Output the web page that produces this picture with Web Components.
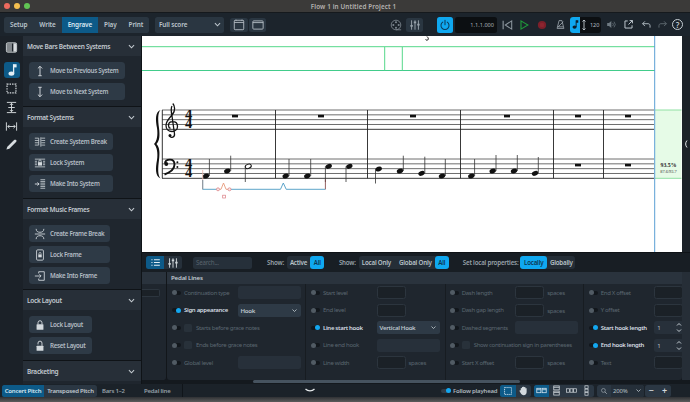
<!DOCTYPE html>
<html>
<head>
<meta charset="utf-8">
<title>Flow 1 in Untitled Project 1</title>
<style>
  html, body { margin: 0; padding: 0; background: #4a4a4a; }
  body { font-family: "Noto Sans", "Liberation Sans", sans-serif; }
</style>
</head>
<body>
<dm-app></dm-app>
<script>
const icons = {
  prevSystem: `<path d="M7 1.5V12.5M5 12.5H9M4.5 4L7 1.5L9.5 4" fill="none" stroke="currentColor" stroke-width="1.1"/>`,
  nextSystem: `<path d="M7 1.5V12.5M5 1.5H9M4.5 10L7 12.5L9.5 10" fill="none" stroke="currentColor" stroke-width="1.1"/>`,
  systemBreak: `<path d="M1 2.5H5.5M1 5.2H5.5M1 7.9H5.5M1 10.6H5.5M8 1.5V12.5M8.5 2.5H13M8.5 5.2H13M8.5 7.9H13M8.5 10.6H13M5.5 2.5V10.6" fill="none" stroke="currentColor" stroke-width=".9"/>`,
  lockSystem: `<path d="M1 2.5H13M1 11.5H13M1 5H3.5M1 7H3.5M1 9H3.5M10.5 5H13M10.5 7H13M10.5 9H13" fill="none" stroke="currentColor" stroke-width=".9"/><rect x="4.6" y="6" width="4.8" height="4" fill="currentColor"/><path d="M5.6 6V4.8a1.4 1.4 0 0 1 2.8 0V6" fill="none" stroke="currentColor" stroke-width=".9"/>`,
  intoSystem: `<path d="M1 7H5.5M4 5.3L6 7L4 8.7" fill="none" stroke="currentColor" stroke-width="1.1"/><path d="M7.5 2H13M7.5 4H13M7.5 6H13M7.5 8H13M7.5 10H13M7.5 12H13" fill="none" stroke="currentColor" stroke-width=".9"/>`,
  frameBreak: `<path d="M2.5 1C2.5 4 4.5 5 7 5S11.5 4 11.5 1M2.5 13C2.5 10 4.5 9 7 9S11.5 10 11.5 13" fill="none" stroke="currentColor" stroke-width="1"/><path d="M1 7H13" stroke="currentColor" stroke-width="1"/>`,
  lockFrame: `<rect x="3" y="1" width="8" height="12" rx="1.2" fill="none" stroke="currentColor" stroke-width="1"/><rect x="5" y="6.3" width="4" height="3.4" fill="currentColor"/><path d="M5.8 6.3V5.2a1.2 1.2 0 0 1 2.4 0V6.3" fill="none" stroke="currentColor" stroke-width=".8"/>`,
  intoFrame: `<path d="M5.5 4V2H12V12H5.5V10" fill="none" stroke="currentColor" stroke-width="1"/><path d="M1 7H8M6.3 5L8.3 7L6.3 9" fill="none" stroke="currentColor" stroke-width="1"/>`,
  lock: `<rect x="3" y="6.2" width="8" height="6.3" rx=".6" fill="currentColor"/><path d="M4.7 6.2V4.3a2.3 2.3 0 0 1 4.6 0V6.2" fill="none" stroke="currentColor" stroke-width="1.1"/>`,
  unlock: `<rect x="3" y="6.8" width="8" height="5.7" rx=".6" fill="currentColor"/><path d="M4.7 5.2V3.6a2.3 2.3 0 0 1 4.6 0V6.8" fill="none" stroke="currentColor" stroke-width="1.1"/>`,
  panel: `<rect x="1.5" y="2" width="11" height="10" rx="1.4" fill="none" stroke="currentColor" stroke-width="1"/><path d="M2 2.5H7.5V11.5H2Z" fill="currentColor" opacity=".55"/><path d="M9 2.5H12V11.5H9Z" fill="currentColor"/>`,
  note: `<path d="M8.6 1.2V10.4" stroke="currentColor" stroke-width="1.3"/><path d="M8.6 1.2H11.6V4.4H8.6Z" fill="currentColor"/><ellipse cx="6.4" cy="10.6" rx="2.9" ry="2.2" fill="currentColor"/>`,
  marquee: `<rect x="2.2" y="2.2" width="9.6" height="9.6" fill="none" stroke="currentColor" stroke-width="1.3" stroke-dasharray="1.6 1.1"/>`,
  fitV: `<path d="M2 1.5H12M2 12.5H12M3.5 7H10.5M7 2.5V11.5M5.2 4.3L7 2.5L8.8 4.3M5.2 9.7L7 11.5L8.8 9.7" fill="none" stroke="currentColor" stroke-width="1"/>`,
  fitH: `<path d="M1.5 2.5V11.5M12.5 2.5V11.5M3 7H11M4.8 5.2L3 7L4.8 8.8M9.2 5.2L11 7L9.2 8.8" fill="none" stroke="currentColor" stroke-width="1"/>`,
  pencil: `<path d="M1.5 12.5L2.5 9.3L9.8 2.2C10.5 1.6 11.4 1.6 12 2.2C12.6 2.8 12.5 3.7 11.9 4.3L4.7 11.5Z" fill="currentColor"/>`,
  layoutA: `<rect x="1.5" y="1.5" width="11" height="11" rx="1" fill="none" stroke="currentColor" stroke-width="1"/><path d="M1.5 4H12.5" stroke="currentColor" stroke-width="1"/><path d="M3.5 1V3M10.5 1V3" stroke="currentColor" stroke-width="1.2" stroke-dasharray="1 .8"/>`,
  layoutB: `<rect x="1" y="2.2" width="12" height="9.6" rx="1" fill="none" stroke="currentColor" stroke-width="1"/><path d="M1 4.2H13" stroke="currentColor" stroke-width="1"/>`,
  film: `<circle cx="7" cy="7" r="5.6" fill="none" stroke="currentColor" stroke-width="1"/><circle cx="7" cy="3.9" r="1.2" fill="currentColor"/><circle cx="7" cy="10.1" r="1.2" fill="currentColor"/><circle cx="3.9" cy="7" r="1.2" fill="currentColor"/><circle cx="10.1" cy="7" r="1.2" fill="currentColor"/><path d="M7 12.6H13" stroke="currentColor" stroke-width="1"/>`,
  mixer: `<path d="M3 1.5V12.5M7 1.5V12.5M11 1.5V12.5" stroke="currentColor" stroke-width="1.1"/><path d="M1.6 8H4.4M5.6 4H8.4M9.6 6.5H12.4" stroke="currentColor" stroke-width="2"/>`,
  power: `<path d="M4.4 3.6A4.7 4.7 0 1 0 9.6 3.6M7 1.5V6.8" fill="none" stroke="currentColor" stroke-width="1.2" stroke-linecap="round"/>`,
  rewind: `<path d="M2.5 2V12" stroke="currentColor" stroke-width="1.3"/><path d="M12.5 2.2V11.8L5 7Z" fill="none" stroke="currentColor" stroke-width="1.2"/>`,
  play: `<path d="M3.5 2.2V11.8L11.5 7Z" fill="none" stroke="currentColor" stroke-width="1.3"/>`,
  record: `<circle cx="7" cy="7" r="4.8" fill="#7c1f2a"/><circle cx="7" cy="7" r="2.6" fill="#8d2530"/>`,
  metronome: `<path d="M5.2 2H8.8L11.3 12H2.7Z" fill="none" stroke="currentColor" stroke-width="1"/><path d="M4 10L10.5 3.5M3.5 10H10.5" stroke="currentColor" stroke-width="1"/>`,
  speaker: `<path d="M1.5 5.2H3.8L6.8 2.7V11.3L3.8 8.8H1.5Z" fill="currentColor"/><path d="M8.5 5A3 3 0 0 1 8.5 9M10.2 3.4A5.4 5.4 0 0 1 10.2 10.6" fill="none" stroke="currentColor" stroke-width=".9"/>`,
  exportIcon: `<path d="M6 2.5H2.5V11.5H11.5V8M7 7L12 2M8.5 2H12V5.5" fill="none" stroke="currentColor" stroke-width="1.2"/>`,
  undo: `<path d="M5 3L2 6L5 9M2 6H9C10.6 6 11.5 7 11.5 8.5V11" fill="none" stroke="currentColor" stroke-width="1.2"/>`,
  redo: `<path d="M9 3L12 6L9 9M12 6H5C3.4 6 2.5 7 2.5 8.5V11" fill="none" stroke="currentColor" stroke-width="1.2"/>`,
  chevron: `<path d="M3 5L7 9L11 5" fill="none" stroke="currentColor" stroke-width="1.7"/>`,
  list: `<path d="M5 3.5H12.5M5 7H12.5M5 10.5H12.5" stroke="currentColor" stroke-width="1.3"/><path d="M1.8 3.5H3.2M1.8 7H3.2M1.8 10.5H3.2" stroke="currentColor" stroke-width="1.5"/>`,
  hand: `<path d="M3.5 6.5V4.2a.8.8 0 0 1 1.5 0V2.8a.8.8 0 0 1 1.5 0V2.4a.8.8 0 0 1 1.5 0V3a.8.8 0 0 1 1.5 0V4.4a.8.8 0 0 1 1.5 0V9c0 2.4-1.4 4-3.7 4-2 0-3-1-3.8-2.4L2 7.8c-.4-.9.9-1.6 1.5-.9Z" fill="currentColor"/>`,
  viewA: `<rect x="1" y="4.2" width="5.2" height="5.6" fill="none" stroke="currentColor" stroke-width="1"/><rect x="7.8" y="4.2" width="5.2" height="5.6" fill="none" stroke="currentColor" stroke-width="1"/><path d="M1 6H6M8 6H13" stroke="currentColor" stroke-width="1"/>`,
  viewB: `<rect x="3.5" y="1.2" width="7" height="5" fill="none" stroke="currentColor" stroke-width="1"/><rect x="3.5" y="7.8" width="7" height="5" fill="none" stroke="currentColor" stroke-width="1"/><path d="M3.5 3H10.5M3.5 9.6H10.5" stroke="currentColor" stroke-width="1"/>`,
  viewC: `<rect x=".8" y="4.8" width="3.6" height="4.4" fill="none" stroke="currentColor" stroke-width=".9"/><rect x="5.2" y="4.8" width="3.6" height="4.4" fill="none" stroke="currentColor" stroke-width=".9"/><rect x="9.6" y="4.8" width="3.6" height="4.4" fill="none" stroke="currentColor" stroke-width=".9"/>`,
  viewD: `<rect x="5" y="1" width="4" height="3.4" fill="none" stroke="currentColor" stroke-width=".9"/><rect x="5" y="5.3" width="4" height="3.4" fill="none" stroke="currentColor" stroke-width=".9"/><rect x="5" y="9.6" width="4" height="3.4" fill="none" stroke="currentColor" stroke-width=".9"/>`,
  search: `<circle cx="6" cy="6" r="3.4" fill="none" stroke="currentColor" stroke-width="1.2"/><path d="M8.5 8.5L12 12" stroke="currentColor" stroke-width="1.5"/>`
};

function icon(name, size = 14) {
  return `<svg width="${size}" height="${size}" viewBox="0 0 14 14" aria-hidden="true">${icons[name]}</svg>`;
}

class dmComponent extends HTMLElement {
  get html() {
    return ``;
  }

  get css() {
    return ``;
  }

  connectedCallback() {
    if (!this.shadowRoot) {
      this.attachShadow({ mode: 'open' });
    }
    this.shadowRoot.innerHTML = `<style>${this.css}</style>${this.html}`;
  }

  static define() {
    const elementName = this.name.replace(
      /([a-z0-9])([A-Z])/g, '$1-$2').toLowerCase();

    if (!customElements.get(elementName)) {
      customElements.define(elementName, this);
    }
  }
}

class dmTitleBar extends dmComponent {
  get css() {
    return `
      :host { display: flex; align-items: center; height: 12px; background: #3b3a39; position: relative;
        border-bottom: 1px solid #15191d; }
      .lights { display: flex; gap: 4px; padding-left: 4px; }
      .lights i { width: 6px; height: 6px; border-radius: 50%; display: block; }
      .title { flex: 1; text-align: center; font-size: 6.3px; font-weight: 600; color: #b5b3b1; padding-right: 13px; letter-spacing: .02em; }
    `;
  }

  get html() {
    return `
      <div class="lights">
        <i style="background:#ed6a5e"></i><i style="background:#f4bf4f"></i><i style="background:#61c554"></i>
      </div>
      <div class="title">Flow 1 in Untitled Project 1</div>
    `;
  }
}

class dmToolbar extends dmComponent {
  get css() {
    return `
      :host { display: flex; align-items: center; height: 23px; background: #1c242c; color: #bcc5cc;
        font-size: 6.4px; font-weight: 600; letter-spacing: -.12px; }
      .tabs { display: flex; align-items: center; height: 16px; margin-left: 4px; width: 145px; background: #2a3641;
        border-radius: 2.5px; overflow: hidden; }
      .tabs span { padding: 0 6px; line-height: 16px; }
      .tabs .on { background: #0d5a88; color: #d9e8f2; padding: 0 6px; }
      .select { display: flex; align-items: center; justify-content: space-between; width: 63px; height: 16px; margin-left: 6px;
        padding: 0 2px 0 4px; background: #2a3641; border-radius: 2.5px; }
      .btn { display: flex; align-items: center; justify-content: center; width: 17px; height: 14px; background: #2a3641;
        border-radius: 2.5px; }
      .plain { display: flex; align-items: center; justify-content: center; width: 14px; height: 16px; }
      .power { display: flex; align-items: center; justify-content: center; width: 16px; height: 16px; margin-left: 14px;
        background: #0fa8f0; color: #0c3a58; border-radius: 2.5px; }
      .time { width: 39px; height: 16px; margin-left: 2px; padding-right: 3px; background: #0c0f12; border-radius: 2.5px;
        color: #a9b2b9; font-size: 5.6px; font-weight: 400; line-height: 16px; text-align: right; letter-spacing: 0; }
      .tempo { display: flex; align-items: center; width: 31px; height: 16px; margin-left: 3px; background: #0c0f12;
        border-radius: 3px; overflow: hidden; color: #b6bec4; font-size: 5.6px; font-weight: 400; }
      .tempo b { display: flex; align-items: center; justify-content: center; width: 10px; height: 16px; background: #0fa8f0; color: #0c1c28; }
      .tempo em { font-style: normal; padding-left: 3px; }
      .help { display: flex; align-items: center; justify-content: center; width: 11px; height: 11px; margin-left: 3px;
        border: 1.2px solid #c6ced4; border-radius: 50%; font-size: 8px; color: #c6ced4; line-height: 1; box-sizing: border-box; }
    `;
  }

  get html() {
    return `
      <div class="tabs">
        <span>Setup</span><span style="padding-left:6px">Write</span><span class="on">Engrave</span><span>Play</span><span>Print</span>
      </div>
      <div class="select"><span>Full score</span>${icon('chevron', 9)}</div>
      <div class="btn" style="margin-left:6px;width:18px">${icon('layoutA', 12)}</div>
      <div class="btn" style="margin-left:1px">${icon('layoutB', 12)}</div>
      <div class="plain" style="margin-left:123px;color:#7d878f">${icon('film', 12)}</div>
      <div class="btn" style="margin-left:3px;color:#98a3ab">${icon('mixer', 12)}</div>
      <div class="power">${icon('power', 12)}</div>
      <div class="time">1.1.1.000</div>
      <div class="plain" style="margin-left:3px;color:#8e98a0">${icon('rewind', 12)}</div>
      <div class="plain" style="margin-left:3px;color:#1f9a3a">${icon('play', 12)}</div>
      <div class="plain" style="margin-left:4px">${icon('record', 12)}</div>
      <div class="plain" style="margin-left:4px;color:#a2abb2">${icon('metronome', 11)}</div>
      <div class="tempo"><b>${icon('note', 11)}</b>${`<svg width="6" height="12" viewBox="0 0 6 12" style="margin-left:1px"><path d="M3 1V11M1.5 2.5L3 1L4.5 2.5M1.5 9.5L3 11L4.5 9.5" fill="none" stroke="#c3cbd1" stroke-width=".9"/></svg>`}<em>120</em></div>
      <div class="plain" style="margin-left:3px;color:#6f7a82">${icon('speaker', 11)}</div>
      <div class="plain" style="margin-left:3px;color:#c6ced4">${icon('exportIcon', 11)}</div>
      <div class="plain" style="margin-left:4px;color:#b3bcc3">${icon('undo', 11)}</div>
      <div class="plain" style="margin-left:2px;color:#5e6870">${icon('redo', 11)}</div>
      <div class="help">?</div>
    `;
  }
}

class dmRail extends dmComponent {
  get css() {
    return `
      :host { display: flex; flex-direction: column; align-items: center; width: 23px; flex: none; background: #1b2128;
        color: #d7dcdf; box-sizing: border-box; padding-top: 3px; }
      .item { display: flex; align-items: center; justify-content: center; width: 16px; height: 16px; border-radius: 3px; margin-bottom: 2.8px; }
      .on { background: #0d5a88; color: #e2eef5; margin-top: 4px; }
    `;
  }

  get html() {
    return `
      <div class="item">${icon('panel', 13)}</div>
      <div class="item on">${icon('note', 14)}</div>
      <div class="item">${icon('marquee', 13)}</div>
      <div class="item">${icon('fitV', 13)}</div>
      <div class="item">${icon('fitH', 13)}</div>
      <div class="item">${icon('pencil', 13)}</div>
    `;
  }
}

class dmSection extends dmComponent {
  get css() {
    return `
      :host { display: block; border-bottom: 1px solid #0f1317; background: #1f262e; height: var(--h, auto); box-sizing: border-box; }
      header { display: flex; align-items: center; justify-content: space-between; height: 20px; padding: 0 5px 0 4px;
        background: #272f38; color: #c3cad0; font-size: 6.5px; font-weight: 600; letter-spacing: -.3px; }
      svg { color: #c3cad0; }
      .body { display: flex; flex-direction: column; align-items: flex-start; gap: 4px; padding: 6px 0 0 6px; }
    `;
  }

  get html() {
    return `
      <header><span>${this.getAttribute('heading')}</span>${icon('chevron', 9)}</header>
      <div class="body"><slot></slot></div>
    `;
  }
}

class dmAction extends dmComponent {
  get css() {
    return `
      :host { display: flex; align-items: center; height: 17px; border-radius: 3.5px; background: #2e3a46; color: #b4bdc4;
        font-size: 6.2px; font-weight: 600; letter-spacing: -.3px; white-space: nowrap; box-sizing: border-box; width: var(--w, 96px); }
      .ico { display: flex; justify-content: center; width: 20px; margin-left: 1px; color: #d4dade; flex: none; }
    `;
  }

  get html() {
    return `<span class="ico">${icon(this.getAttribute('icon'), 12)}</span><slot></slot>`;
  }
}

class dmPanel extends dmComponent {
  get css() {
    return `
      :host { display: flex; flex-direction: column; width: 118px; flex: none; margin-right: 1px; background: #1f262e; overflow: hidden; }
      dm-section:nth-of-type(1) { --h: 71px; --w: 96px; }
      dm-section:nth-of-type(2) { --h: 92px; --w: 84px; }
      dm-section:nth-of-type(3) { --h: 91px; --w: 81px; }
      dm-section:nth-of-type(4) { --h: 71px; --w: 63px; }
      dm-section:nth-of-type(5) { --h: 23px; border-bottom: 0; }
    `;
  }

  get html() {
    return `
      <dm-section heading="Move Bars Between Systems">
        <dm-action icon="prevSystem">Move to Previous System</dm-action>
        <dm-action icon="nextSystem">Move to Next System</dm-action>
      </dm-section>
      <dm-section heading="Format Systems">
        <dm-action icon="systemBreak">Create System Break</dm-action>
        <dm-action icon="lockSystem">Lock System</dm-action>
        <dm-action icon="intoSystem">Make Into System</dm-action>
      </dm-section>
      <dm-section heading="Format Music Frames">
        <dm-action icon="frameBreak">Create Frame Break</dm-action>
        <dm-action icon="lockFrame">Lock Frame</dm-action>
        <dm-action icon="intoFrame">Make Into Frame</dm-action>
      </dm-section>
      <dm-section heading="Lock Layout">
        <dm-action icon="lock">Lock Layout</dm-action>
        <dm-action icon="unlock">Reset Layout</dm-action>
      </dm-section>
      <dm-section heading="Bracketing"></dm-section>
    `;
  }
}

class dmScore extends dmComponent {
  staff(top, x1, x2) {
    let out = '';
    for (let i = 0; i < 5; i++) {
      const y = top + i * 4.83;
      out += `<path d="M${x1} ${y}H${x2}" stroke="${i === 4 ? '#3a3a3a' : '#6e6e6e'}" stroke-width="1"/>`;
    }
    return out;
  }

  note(x, y, stemX, stemEnd) {
    return `<ellipse cx="${x}" cy="${y}" rx="3.3" ry="2.3" transform="rotate(-22 ${x} ${y})" fill="#111"/>
      <path d="M${stemX} ${y}V${stemEnd}" stroke="#333" stroke-width=".8"/>`;
  }

  timeSig(y) {
    return `<foreignObject x="181" y="${y}" width="15" height="22"><div class="sig">4\n4</div></foreignObject>`;
  }

  get css() {
    return `
      :host { display: block; height: 216px; flex: none; background: #fff; overflow: hidden; }
      svg { display: block; }
      text { font-family: "Liberation Serif", serif; }
      .sig { font: 700 14.5px/9.8px "Liberation Serif", serif; color: #111; text-align: center; white-space: pre; }
    `;
  }

  get html() {
    const rests = [235, 321, 413, 507, 578, 628].map(x =>
      `<rect x="${x - 3}" y="114.8" width="6" height="2.6" fill="#111"/>`).join('');
    const lowRests = [578, 628].map(x =>
      `<rect x="${x - 3}" y="163.8" width="6" height="2.6" fill="#111"/>`).join('');
    const bars = [275.5, 367.5, 460.5, 553.5, 603.5].map(x =>
      `<path d="M${x} 110V178.3" stroke="#222" stroke-width=".9"/>`).join('');
    const notes = [
      [206, 176, 209.4, 159], [227.3, 171, 230.7, 155.7],
      [285.7, 176, 289, 159], [307.3, 176, 310.7, 159],
      [328.7, 166.3, 325.4, 182], [349.3, 166.3, 346, 182],
      [378.7, 169, 375.5, 183.5], [400, 171, 403.3, 155.7],
      [421.5, 173.3, 424.8, 156.7], [442, 176, 445.3, 159],
      [471.3, 176, 474.6, 159], [492.7, 171, 496, 155],
      [514, 171, 517.3, 155], [535, 173.3, 538.3, 157]
    ].map(n => this.note(...n)).join('');

    return `
      <svg width="540" height="216" viewBox="142 36 540 216">
        <path d="M142 46.7H655M142 70.5H655" stroke="#55d88a" stroke-width="1"/>
        <path d="M142 70.5H655" stroke="#35c48c" stroke-width=".6"/>
        <path d="M384.7 47V70.5M402.3 47V70.5" stroke="#55d88a" stroke-width="1"/>
        <path d="M427 36.5c1.4 1.4 1.8 2.6 .8 3.4c-.9 .6-2 .2-2.2-.6" fill="none" stroke="#111" stroke-width="1"/>
        <rect x="655" y="110" width="26.5" height="68.3" fill="#e6fbe7"/>
        <path d="M655 110H681.5M655 178.3H681.5" stroke="#8fe0a3" stroke-width="1"/>
        <path d="M654.7 36V252" stroke="#5b9fd4" stroke-width="1"/>
        <text x="668.5" y="167.2" font-size="5.8" font-weight="700" text-anchor="middle" fill="#222">93.5%</text>
        <text x="668.5" y="173" font-size="4.4" text-anchor="middle" fill="#333">87.6/93.7</text>

        ${this.staff(110, 162, 654)}
        ${this.staff(159, 162, 654)}
        <path d="M162.3 110V178.3" stroke="#333" stroke-width="1"/>
        ${bars}
        <path d="M160.5 110C155 112 155.5 120 157 128C158 135 157 141 154 144C157 147 158 153 157 160C155.5 168 155 176 160.5 178.5C157.5 175 158 168 159 160C160 152 159.5 147 156.5 144C159.5 141 160 136 159 128C158 120 157.5 113 160.5 110Z" fill="#111"/>

        <path d="M172.8 103.5C175 106 175.5 110.5 172.5 114.5C169 118.5 166 121 166 125.5C166 129.5 169 131.5 172 131.5C175 131.5 177.5 129.5 177.5 126.5C177.5 123.5 175.3 121.7 172.6 121.7C170 121.7 168.5 123.5 168.5 125.5C168.5 127 169.4 128 170.5 128.4M172 106C170.8 108 171.2 112 172 116L174.5 134C175 137 171 138.5 169.5 136" fill="none" stroke="#111" stroke-width="1.3"/>
        <circle cx="170" cy="135.6" r="1.5" fill="#111"/>
        <path d="M164.5 174.5C171 172 174.5 168.5 174.5 164.5C174.5 161 172.5 159.6 170 159.6C167 159.6 165 161.3 165 163.6" fill="none" stroke="#111" stroke-width="1.9"/>
        <circle cx="166.3" cy="164" r="1.9" fill="#111"/>
        <circle cx="177.4" cy="162.3" r="1" fill="#111"/><circle cx="177.4" cy="167" r="1" fill="#111"/>

        ${this.timeSig(109.6)}
        ${this.timeSig(158.6)}

        ${rests}${lowRests}${notes}
        <ellipse cx="248.3" cy="166.3" rx="3.1" ry="2.1" transform="rotate(-22 248.3 166.3)" fill="#fff" stroke="#111" stroke-width="1"/>
        <path d="M245.3 166.3V182" stroke="#333" stroke-width=".8"/>

        <path d="M202.7 170V180" stroke="#e5b3a8" stroke-width=".8"/>
        <path d="M202.7 180V189.3H217M231 189.3H280.5L283.3 183L286.2 189.3H325.4" fill="none" stroke="#4c9bc4" stroke-width=".9"/>
        <path d="M202.7 180V189.3" stroke="#a08a86" stroke-width=".8"/>
        <path d="M325.4 179.5V189.3" stroke="#7a3a3a" stroke-width=".8"/>
        <path d="M219.5 189.3H221L223.5 183L226 189.3H228" fill="none" stroke="#e79a7a" stroke-width=".9"/>
        <circle cx="218" cy="189.3" r="1.5" fill="#fbe9e5" stroke="#d97a80" stroke-width=".7"/>
        <circle cx="229.5" cy="189.3" r="1.5" fill="#fbe9e5" stroke="#d97a80" stroke-width=".7"/>
        <rect x="222.7" y="195.2" width="2.8" height="2.8" fill="#fff" stroke="#d97a80" stroke-width=".7"/>
      </svg>
    `;
  }
}

class dmFilterBar extends dmComponent {
  get css() {
    return `
      :host { display: flex; align-items: center; height: 19px; flex: none; background: #181e24; color: #98a2aa; font-size: 6.2px; font-weight: 600;
        letter-spacing: -.2px; white-space: nowrap; }
      .icons { display: flex; margin-left: 4px; border-radius: 2.5px; overflow: hidden; }
      .icons span { display: flex; align-items: center; justify-content: center; width: 18px; height: 13px; background: #26303a; color: #cfd6da; }
      .icons .on { background: #0d5a88; color: #e2eef5; }
      .search { width: 56px; height: 12px; padding-left: 3px; margin-left: 11px; background: #26303a; border-radius: 2.5px;
        color: #59646d; line-height: 12px; font-weight: 400; }
      .group { display: flex; align-items: center; height: 13px; background: #252e37; border-radius: 3px; color: #b9c2c8; }
      .group span { padding: 0 3px; line-height: 13px; border-radius: 3px; }
      .group .on { background: #0fa8f0; color: #0d3750; }
    `;
  }

  get html() {
    return `
      <div class="icons"><span class="on">${icon('list', 11)}</span><span>${icon('mixer', 12)}</span></div>
      <div class="search">Search...</div>
      <span style="margin-left:15px">Show:</span>
      <div class="group" style="position:relative;margin-left:3px;width:37px"><span>Active</span><span class="on" style="margin-left:auto;padding:0 3.5px">All</span></div>
      <span style="margin-left:15px">Show:</span>
      <div class="group" style="margin-left:3px;width:87px"><span>Local Only</span><span style="padding-left:5px">Global Only</span><span class="on" style="margin-left:auto;padding:0 3.5px">All</span></div>
      <span style="margin-left:17px">Set local properties:</span>
      <div class="group" style="margin-left:2px;width:55px"><span class="on" style="padding:0 3.5px">Locally</span><span style="padding-left:3px">Globally</span></div>
    `;
  }
}

class dmProp extends dmComponent {
  get css() {
    return `
      :host { display: flex; align-items: center; height: 17.5px; font-size: 6px; letter-spacing: -.3px; color: #5b6670; white-space: nowrap; }
      :host([active]) { color: #d6dde2; font-weight: 600; }
      .pill { position: relative; width: 9px; height: 4px; margin-right: 3px; flex: none; background: #12171c; border-radius: 2px; }
      .pill i { position: absolute; left: 0; top: -.5px; width: 5px; height: 5px; border-radius: 50%; background: #515b64; }
      :host([active]) .pill i { left: 4px; background: #13a7f0; }
      .label { display: flex; align-items: center; width: 53.5px; flex: none; overflow: visible; }
      .check { width: 8px; height: 8px; margin-right: 4px; flex: none; background: #28313a; border-radius: 1.5px; }
      .field { display: flex; align-items: center; justify-content: space-between; height: 13px; box-sizing: border-box; border-radius: 2.5px; flex: none;
        padding: 0 3px; font-size: 6.1px; font-weight: 600; color: #bcc5cb; }
      .dim { width: 63px; background: #27303a; }
      .box { width: 29px; background: #1b2127; border: 1px solid #2c353e; }
      .select { width: 63px; background: #2e3a46; }
      .stepper { width: 29px; background: #27303a; font-weight: 400; }
      .stepper svg { margin-right: -2px; }
      .unit { margin-left: 3px; font-size: 6.1px; color: #5b6670; }
      .check-row { overflow: visible; width: auto; }
    `;
  }

  get html() {
    const field = this.getAttribute('field');
    const value = this.getAttribute('value') || '';
    let control = '';

    if (field === 'select') {
      control = `<div class="field select"><span>${value}</span>${icon('chevron', 7)}</div>`;
    } else if (field === 'stepper') {
      control = `<div class="field stepper"><span>${value}</span><svg width="6" height="11" viewBox="0 0 6 11"><path d="M1 3.5L3 1.5L5 3.5M1 7.5L3 9.5L5 7.5" fill="none" stroke="#c4ccd2" stroke-width="1"/></svg></div>`;
    } else if (field === 'box') {
      control = `<div class="field box"></div>`;
    } else if (field === 'dim') {
      control = `<div class="field dim"></div>`;
    }

    const unit = this.hasAttribute('unit') ? `<span class="unit">${this.getAttribute('unit')}</span>` : '';
    const check = this.hasAttribute('check') ? `<span class="check"></span>` : '';
    const labelClass = this.hasAttribute('check') ? 'label check-row' : 'label';

    return `<span class="pill"><i></i></span><span class="${labelClass}">${check}${this.getAttribute('label')}</span>${control}${unit}`;
  }
}

class dmProperties extends dmComponent {
  get css() {
    return `
      :host { display: flex; height: 108px; flex: none; background: #14191e; position: relative; }
      .side { width: 25px; flex: none; margin-right: 0; background: #1f262e; border-radius: 0 0 3px 0; border-right: 1px solid #12161a; box-sizing: border-box; }
      .side i { display: block; height: 12px; background: #2a333d; }
      .side b { display: block; width: 18px; height: 8px; margin-top: 5px; background: #1b2127; border: 1px solid #2c353e; border-left: 0; border-radius: 0 2px 2px 0; box-sizing: border-box; }
      .main { flex: 1; background: #1f262e; border-radius: 0 0 3px 3px; margin-right: 0; }
      .head { height: 12px; padding-left: 4px; background: #2a333d; color: #c4ccd2; font-size: 6.1px; font-weight: 600; line-height: 12px; letter-spacing: -.15px; }
      .cols { display: grid; grid-template-columns: 139px 140px 138px 1fr; padding-top: 0; height: 96px; overflow: hidden; }
      .col { box-sizing: border-box; padding: 0 0 0 5px; border-right: 1px solid #171c21; padding-top: 0; }
      .col:nth-child(3) { padding-left: 3.7px; }
      .col:nth-child(4) { padding-left: 4.7px; border-right: 0; overflow: hidden; }
      .strip { width: 8px; flex: none; background: #262e37; }
    `;
  }

  get html() {
    return `
      <div class="side"><i></i><b></b></div>
      <div class="main">
        <div class="head">Pedal Lines</div>
        <div class="cols">
          <div class="col">
            <dm-prop label="Continuation type" field="dim"></dm-prop>
            <dm-prop label="Sign appearance" field="select" value="Hook" active></dm-prop>
            <dm-prop label="Starts before grace notes" check></dm-prop>
            <dm-prop label="Ends before grace notes" check></dm-prop>
            <dm-prop label="Global level" field="dim"></dm-prop>
          </div>
          <div class="col">
            <dm-prop label="Start level" field="box"></dm-prop>
            <dm-prop label="End level" field="box"></dm-prop>
            <dm-prop label="Line start hook" field="select" value="Vertical Hook" active></dm-prop>
            <dm-prop label="Line end hook" field="dim"></dm-prop>
            <dm-prop label="Line width" field="box" unit="spaces"></dm-prop>
          </div>
          <div class="col">
            <dm-prop label="Dash length" field="box" unit="spaces"></dm-prop>
            <dm-prop label="Dash gap length" field="box" unit="spaces"></dm-prop>
            <dm-prop label="Dashed segments" field="dim"></dm-prop>
            <dm-prop label="Show continuation sign in parentheses" check></dm-prop>
            <dm-prop label="Start X offset" field="box" unit="spaces"></dm-prop>
          </div>
          <div class="col">
            <dm-prop label="End X offset" field="box"></dm-prop>
            <dm-prop label="Y offset" field="box"></dm-prop>
            <dm-prop label="Start hook length" field="stepper" value="1" active></dm-prop>
            <dm-prop label="End hook length" field="stepper" value="1" active></dm-prop>
            <dm-prop label="Text" field="box"></dm-prop>
          </div>
        </div>
      </div>
      <div class="strip"></div>
    `;
  }
}

class dmScrollTrack extends dmComponent {
  get css() {
    return `
      :host { display: block; height: 4px; flex: none; background: #14191e; }
      i { display: block; width: 267px; height: 3px; margin-left: 111px; background: #46535f; border-radius: 2px; }
    `;
  }

  get html() {
    return `<i></i>`;
  }
}

class dmStatusBar extends dmComponent {
  get css() {
    return `
      :host { display: flex; align-items: center; height: 13px; flex: none; background: #1b2229; color: #96a0a8; font-size: 6px; font-weight: 600;
        letter-spacing: -.2px; white-space: nowrap; }
      .pitch { display: flex; height: 12px; margin-left: 2px; border-radius: 2.5px; overflow: hidden; background: #2b3743; color: #c1c9cf; }
      .pitch span { line-height: 12px; text-align: center; }
      .pitch .on { background: #0d5a88; color: #d9e8f2; }
      .sep { width: 1px; height: 13px; background: #10151a; }
      .group { display: flex; align-items: center; height: 12px; background: #2b3743; border-radius: 2.5px; overflow: hidden; }
      .group span { display: flex; align-items: center; justify-content: center; height: 12px; width: 15px; color: #d3d9dd; }
      .group .on { background: #0d5a88; color: #d5e6f1; }
      .toggle { display: block; width: 10px; flex: none; }
      .pill { position: relative; display: block; width: 10px; height: 4px; background: #323c46; border-radius: 2px; }
      .pill i { position: absolute; right: 0; top: -.5px; width: 5px; height: 5px; border-radius: 50%; background: #13a7f0; }
      .cell { flex: none; }
    `;
  }

  get html() {
    return `
      <div class="pitch"><span class="on" style="width:42px">Concert Pitch</span><span style="width:53px">Transposed Pitch</span></div>
      <span class="cell" style="width:42px;margin-left:5px">Bars 1–2</span>
      <span class="cell" style="width:38px">Pedal line</span>
      <i class="sep"></i>
      <svg width="10" height="5" viewBox="0 0 10 5" style="margin-left:122px;flex:none"><path d="M.5 1C3 3.4 7 3.4 9.5 1" fill="none" stroke="#e4e8ea" stroke-width="1.3"/></svg>
      <span class="toggle" style="margin-left:126px"><span class="pill"><i></i></span></span>
      <span class="cell" style="width:47px;margin-left:2px;color:#aeb7bd">Follow playhead</span>
      <div class="group">
        <span class="on" style="width:16px">${icon('marquee', 10)}</span><span style="width:15px">${icon('hand', 11)}</span>
      </div>
      <div class="group" style="margin-left:3px">
        <span class="on">${icon('viewA', 11)}</span><span>${icon('viewB', 11)}</span><span>${icon('viewC', 11)}</span><span>${icon('viewD', 11)}</span>
      </div>
      <div class="group" style="margin-left:3px;color:#b7c0c6;font-weight:400">
        <span style="width:14px;color:#9aa4ab">${icon('search', 8)}</span>
        <span style="width:33px;justify-content:space-between;background:#252f39;padding:0 2px;box-sizing:border-box;color:#b7c0c6">200%${icon('chevron', 7)}</span>
      </div>
      <div class="group" style="margin-left:1px;color:#d3d9dd;font-size:9px">
        <span style="width:12px">−</span><span style="width:13px;margin-left:1px">+</span>
      </div>
    `;
  }
}

class dmApp extends dmComponent {
  get css() {
    return `
      :host { display: flex; flex-direction: column; width: 690px; height: 402px; overflow: hidden; background: #4a4a4a; }
      .main { display: flex; height: 348px; flex: none; background: #0f1317; }
      .right { display: flex; flex-direction: column; flex: 1; min-width: 0; }
      .scoreRow { display: flex; flex: none; height: 216px; margin-bottom: 1px; background: #181e24; }
      dm-score { width: 540px; }
      .gutter { display: flex; align-items: center; width: 8px; padding-top: 0; background: #1c2228; color: #dde2e5; font-size: 8px; }
      .gutter svg { margin-left: 2px; }
      .shadow { flex: 1; background: linear-gradient(#2f3134, #5b5b5b); }
    `;
  }

  get html() {
    return `
      <dm-title-bar></dm-title-bar>
      <dm-toolbar></dm-toolbar>
      <div class="main">
        <dm-rail></dm-rail>
        <dm-panel></dm-panel>
        <div class="right">
          <div class="scoreRow">
            <dm-score></dm-score>
            <div class="gutter"><svg width="4" height="8" viewBox="0 0 4 8"><path d="M3 .5C1.2 2.5 1.2 5.5 3 7.5" fill="none" stroke="#dde2e5" stroke-width="1"/></svg></div>
          </div>
          <dm-filter-bar></dm-filter-bar>
          <dm-properties></dm-properties>
          <dm-scroll-track></dm-scroll-track>
        </div>
      </div>
      <dm-status-bar></dm-status-bar>
      <div class="shadow"></div>
    `;
  }
}

[dmTitleBar, dmToolbar, dmRail, dmSection, dmAction, dmPanel, dmScore, dmFilterBar, dmProp,
  dmProperties, dmScrollTrack, dmStatusBar, dmApp].forEach(c => c.define());
</script>
</body>
</html>
